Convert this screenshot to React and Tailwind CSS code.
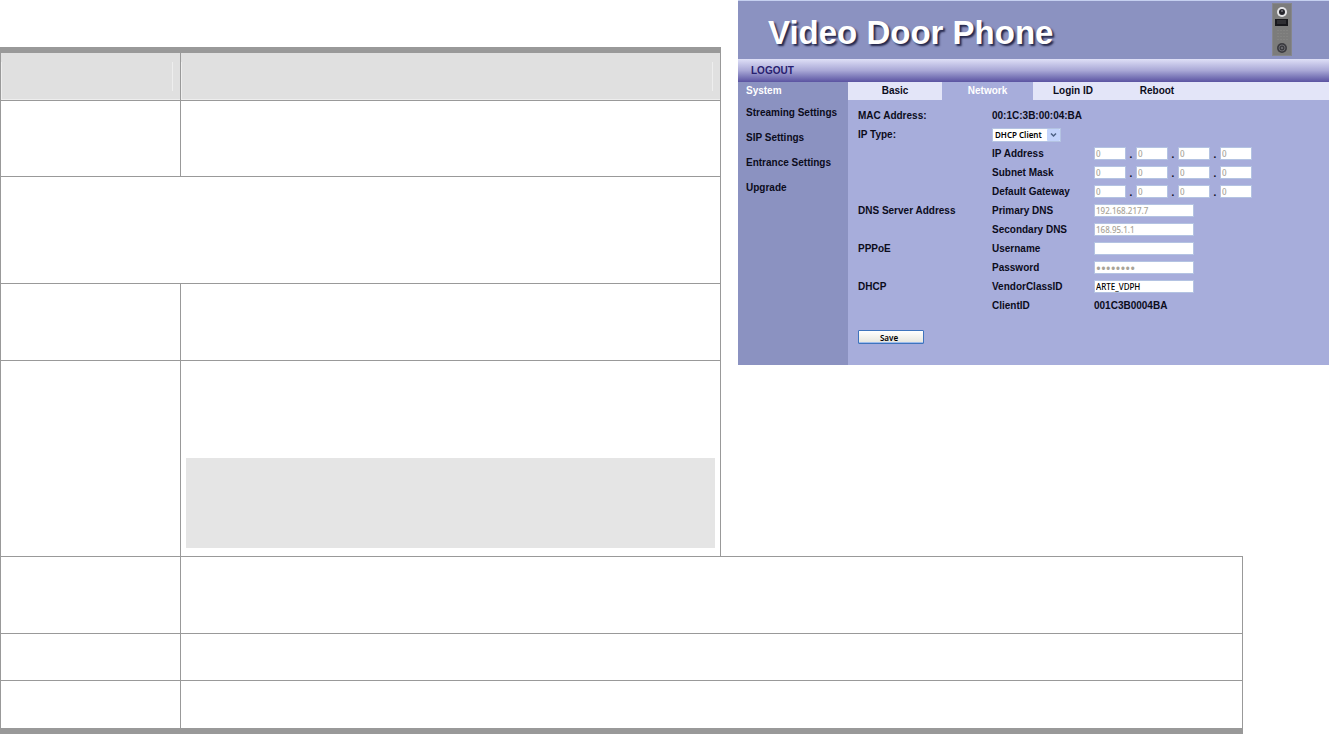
import { useState } from "react";

const MENU = ["Streaming Settings", "SIP Settings", "Entrance Settings", "Upgrade"];

const TABS = [
  { name: "Basic", width: "w-[94px]" },
  { name: "Network", width: "w-[91px]" },
  { name: "Login ID", width: "w-[80px]" },
  { name: "Reboot", width: "w-[88px]" },
];

const ADDRESSES = ["IP Address", "Subnet Mask", "Default Gateway"];

const FIELD =
  "h-[13px] border border-[#b4c3e2] bg-white px-px font-['Noto_Sans',sans-serif] leading-[11px] font-medium text-black outline-none disabled:text-[#a8a498]";

function Row({ group, label, htmlFor, children }) {
  return (
    <div className="grid h-[19px] grid-cols-[134px_102px_1fr] items-center">
      <span>{group}</span>
      <label htmlFor={htmlFor}>{label}</label>
      <div className="flex items-center">{children}</div>
    </div>
  );
}

function AddressRow({ label }) {
  const id = label.toLowerCase().replace(" ", "-");
  return (
    <Row label={label} htmlFor={`${id}-0`}>
      {[0, 1, 2, 3].map((i) => (
        <div key={i} className="flex h-[13px] items-end">
          <input id={`${id}-${i}`} aria-label={`${label} part ${i + 1}`} defaultValue="0" disabled className={`w-8 text-[8px] ${FIELD}`} />
          {i < 3 && <span className="w-[10px] text-center leading-[10px]">.</span>}
        </div>
      ))}
    </Row>
  );
}

function DoorStation() {
  return (
    <svg width="20" height="53" viewBox="0 0 20 53" aria-hidden="true">
      <rect width="20" height="53" fill="#85868a" />
      <rect x="1" y="1" width="18" height="51" fill="#7c7c7b" />
      <circle cx="10" cy="9" r="5" fill="#e4e4e6" />
      <circle cx="10" cy="9" r="3" fill="#25252b" />
      <circle cx="10" cy="8" r="1" fill="#77777f" />
      <rect x="3" y="16" width="13" height="7" fill="#18181c" />
      <path d="M5 18h9M5 20h9" stroke="#46464a" strokeWidth="1" />
      <path d="M6 27v12M9 27v12M12 27v12M15 27v12" stroke="#8b8b8a" strokeWidth="1" strokeDasharray="1 2" />
      <circle cx="10" cy="45" r="5" fill="#3b3b40" />
      <circle cx="10" cy="45" r="3" fill="none" stroke="#68686e" />
      <circle cx="10" cy="45" r="1" fill="#77777c" />
    </svg>
  );
}

function NetworkForm() {
  const [ipType, setIpType] = useState("DHCP Client");

  return (
    <form className="pt-[7px] pb-[21px] pl-[10px]" onSubmit={(e) => e.preventDefault()}>
      <div className="grid h-[18px] grid-cols-[134px_1fr] items-center">
        <span>MAC Address:</span>
        <span>00:1C:3B:00:04:BA</span>
      </div>
      <div className="grid h-[19px] grid-cols-[134px_1fr] items-center">
        <label htmlFor="ip-type">IP Type:</label>
        <div className="relative h-[14px] w-[69px]">
          <select
            id="ip-type"
            value={ipType}
            onChange={(e) => setIpType(e.target.value)}
            className="block h-[14px] w-full appearance-none border border-[#b4c3e2] bg-white pl-[2px] font-['Noto_Sans',sans-serif] text-[8px] leading-[12px] font-semibold text-black"
          >
            <option>DHCP Client</option>
            <option>Static IP</option>
            <option>PPPoE</option>
          </select>
          <svg className="pointer-events-none absolute top-px right-px" width="13" height="12" viewBox="0 0 13 12" aria-hidden="true">
            <rect width="13" height="12" rx="1" fill="#c3d3fb" />
            <path d="M4 4.5l2.5 2.5L9 4.5" fill="none" stroke="#4d6185" strokeWidth="1.5" />
          </svg>
        </div>
      </div>

      {ADDRESSES.map((label) => (
        <AddressRow key={label} label={label} />
      ))}

      <Row group="DNS Server Address" label="Primary DNS" htmlFor="primary-dns">
        <input id="primary-dns" defaultValue="192.168.217.7" disabled className={`w-[100px] text-[8px] ${FIELD}`} />
      </Row>
      <Row label="Secondary DNS" htmlFor="secondary-dns">
        <input id="secondary-dns" defaultValue="168.95.1.1" disabled className={`w-[100px] text-[8px] ${FIELD}`} />
      </Row>
      <Row group="PPPoE" label="Username" htmlFor="username">
        <input id="username" disabled className={`w-[100px] text-[8px] ${FIELD}`} />
      </Row>
      <Row label="Password" htmlFor="password">
        <input id="password" type="password" defaultValue="password" disabled className={`w-[100px] text-[13px] ${FIELD}`} />
      </Row>
      <Row group="DHCP" label="VendorClassID" htmlFor="vendor-class">
        <input id="vendor-class" defaultValue="ARTE_VDPH" className={`w-[100px] text-[8px] ${FIELD}`} />
      </Row>
      <div className="grid h-[19px] grid-cols-[134px_102px_1fr] items-center">
        <span className="col-start-2">ClientID</span>
        <span>001C3B0004BA</span>
      </div>

      <button
        type="submit"
        className="mt-[15px] block h-[14px] w-[66px] rounded-[1px] border border-[#3f74bd] bg-linear-to-b from-white to-[#e6e5dd] pr-1 font-['Noto_Sans',sans-serif] text-[8px] leading-[11px] font-semibold text-black shadow-[inset_0_-1px_0_#9dbcec]"
      >
        Save
      </button>
    </form>
  );
}

function DoorPhonePanel() {
  const [tab, setTab] = useState("Network");

  return (
    <section className="self-start bg-[#8b92c1] text-[10px] leading-[14px] font-bold text-[#0c0c1c]">
      <header className="flex h-[59px] items-start justify-between border-t border-[#c5d0f0] pr-[37px] pl-[30px]">
        <h1 className="mt-[12px] text-[33px] leading-[40px] text-white [text-shadow:2px_2px_2px_#23264a]">Video Door Phone</h1>
        <div className="mt-[2px]">
          <DoorStation />
        </div>
      </header>

      <div className="flex h-[23px] items-center bg-linear-to-b from-[#dfe0f7] via-[#a9a8d6] to-[#5b53a1] pl-[13px]">
        <a href="#logout" className="text-[#28206f]">
          LOGOUT
        </a>
      </div>

      <div className="flex">
        <nav className="flex w-[110px] shrink-0 flex-col pl-2">
          <a href="#system" className="flex h-[18px] items-center text-white">
            System
          </a>
          {MENU.map((item) => (
            <a key={item} href="#menu" className="flex h-[25px] items-center whitespace-nowrap">
              {item}
            </a>
          ))}
        </nav>

        <div className="min-w-0 flex-1 bg-[#a7addb]">
          <div className="flex h-[18px] bg-[#e3e5f8]">
            {TABS.map(({ name, width }) => (
              <button
                key={name}
                type="button"
                onClick={() => setTab(name)}
                className={`${width} ${tab === name ? "bg-[#a7addb] text-white" : ""}`}
              >
                {name}
              </button>
            ))}
          </div>
          <NetworkForm />
        </div>
      </div>
    </section>
  );
}

function HeaderCell() {
  return (
    <th className="border-r border-b border-[#999] bg-[#e0e0e0] p-0 pt-[9px] first:w-[180px]">
      <div className="flex h-[38px] justify-end border-b border-l border-[#eee] pr-[7px]">
        <span className="h-[29px] w-px bg-[#eee]" />
      </div>
    </th>
  );
}

const CELL = "border-r border-b border-[#999] p-0";

export default function App() {
  return (
    <main className="bg-white font-['Liberation_Sans',Arial,sans-serif]">
      <div className="grid grid-cols-[721fr_591fr] gap-[17px]">
        <table className="mt-[47px] w-full table-fixed border-separate border-spacing-0 self-start border-t-[6px] border-l border-[#999]">
          <thead>
            <tr>
              <HeaderCell />
              <HeaderCell />
            </tr>
          </thead>
          <tbody>
            <tr className="h-[76px]">
              <td className={CELL} />
              <td className={CELL} />
            </tr>
            <tr className="h-[107px]">
              <td colSpan={2} className={CELL} />
            </tr>
            <tr className="h-[77px]">
              <td className={CELL} />
              <td className={CELL} />
            </tr>
            <tr className="h-[195px]">
              <td className="border-r border-[#999] p-0" />
              <td className="border-r border-[#999] px-[5px] pt-0 pb-2 align-bottom">
                <div className="h-[90px] bg-[#e5e5e5]" />
              </td>
            </tr>
          </tbody>
        </table>

        <DoorPhonePanel />
      </div>

      <div className="pr-[86px]">
        <table className="w-full table-fixed border-separate border-spacing-0 border-t border-b-[6px] border-l border-[#999]">
          <colgroup>
            <col className="w-[180px]" />
            <col />
          </colgroup>
          <tbody>
            <tr className="h-[77px]">
              <td className={CELL} />
              <td className={CELL} />
            </tr>
            <tr className="h-[47px]">
              <td className={CELL} />
              <td className={CELL} />
            </tr>
            <tr className="h-[47px]">
              <td className="border-r border-[#999] p-0" />
              <td className="border-r border-[#999] p-0" />
            </tr>
          </tbody>
        </table>
      </div>
    </main>
  );
}
